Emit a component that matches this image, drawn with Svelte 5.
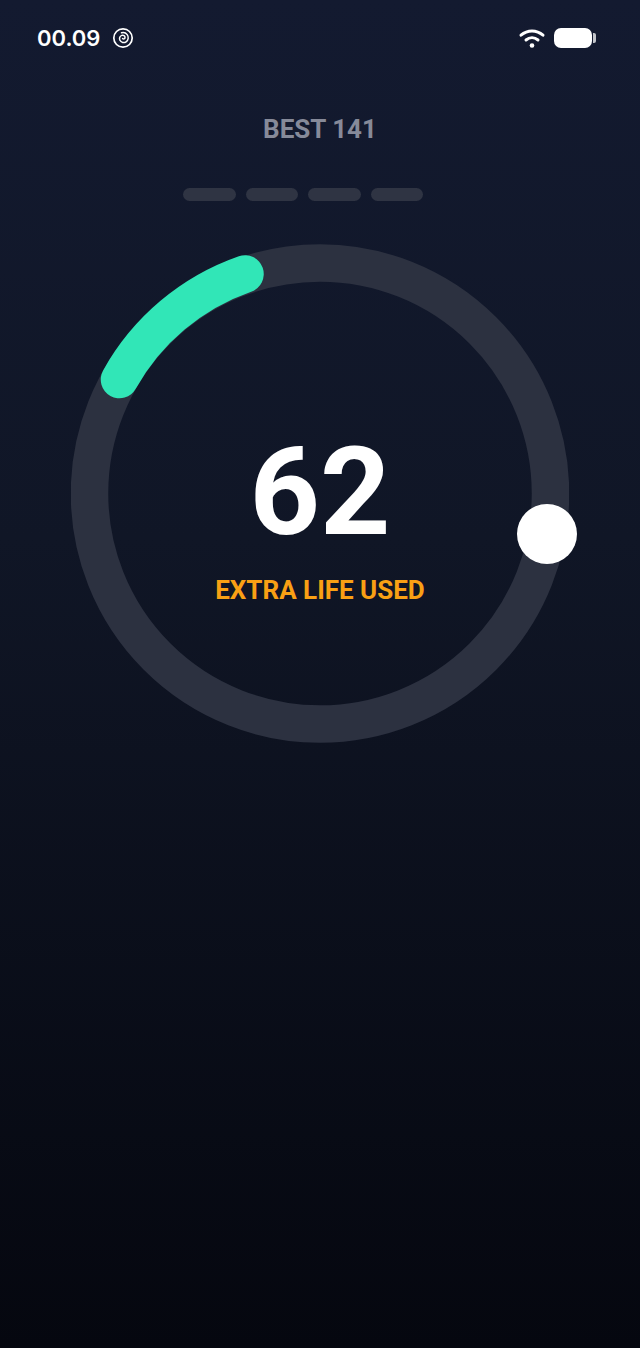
<script>
	let best = 141;
	let score = 62;
	let lives = [1, 2, 3, 4];
</script>

<div class="screen">
	<div class="status">
		<div class="left">
			<span class="time">00.09</span>
			<svg class="spiral" width="22" height="22" viewBox="0 0 22 22" fill="none" stroke="#fff">
				<circle cx="11" cy="11" r="9.200" stroke-width="1.700" />
				<path d="M10.600 11.500c.8.9 2.300.4 2.400-.9.1-1.600-1.600-2.700-3.200-2.200-2 .6-2.800 3-1.900 4.900 1.100 2.200 4.100 2.900 6.200 1.500 2.400-1.600 2.800-5 1.100-7.200-1.400-1.800-3.700-2.400-5.700-1.800" stroke-width="1.500" stroke-linecap="round" />
			</svg>
		</div>
		<div class="right">
			<svg width="28" height="22" viewBox="0 0 28 22" fill="none" stroke="#fff" stroke-width="3" stroke-linecap="round">
				<path d="M3 8.200C9.500 2.500 18.500 2.500 25 8.200" />
				<path d="M8 13c3.600-3 8.400-3 12 0" />
				<circle cx="14" cy="18.500" r="2.300" fill="#fff" stroke="none" />
			</svg>
			<div class="battery"></div>
			<div class="nub"></div>
		</div>
	</div>

	<div class="best">BEST {best}</div>

	<div class="lives">
		{#each lives as life (life)}
			<span class="pip"></span>
		{/each}
	</div>

	<div class="dial">
		<svg width="498" height="499" viewBox="0 0 498 499" fill="none">
			<circle cx="249" cy="249.500" r="230.500" stroke="#2c3140" stroke-width="37.500" />
			<path d="M48.500 135.500A230.500 230.500 0 0 1 174 30" stroke="#31e6b7" stroke-width="37.500" stroke-linecap="round" />
		</svg>
		<div class="center">
			<div class="score">{score}</div>
			<div class="label">EXTRA LIFE USED</div>
		</div>
		<div class="thumb"></div>
	</div>
</div>

<style>
	:global(body) {
		margin: 0;
		background: #05070f;
	}
	.screen {
		height: 1348px;
		box-sizing: border-box;
		padding-top: 24px;
		background: linear-gradient(180deg, #131a30 0%, #101626 40%, #05070f 100%);
		font-family: Roboto, "Liberation Sans", sans-serif;
		overflow: hidden;
	}
	.status {
		display: flex;
		justify-content: space-between;
		align-items: center;
		height: 28px;
		padding: 0 44px 0 37px;
		color: #fff;
	}
	.left,
	.right {
		display: flex;
		align-items: center;
	}
	.time {
		font-family: Inter, sans-serif;
		font-weight: 600;
		font-size: 22px;
		line-height: 28px;
	}
	.spiral {
		margin-left: 12px;
	}
	.battery {
		width: 38.500px;
		height: 20.500px;
		margin-left: 7.500px;
		border-radius: 7px;
		background: #fff;
	}
	.nub {
		width: 3px;
		height: 10px;
		margin-left: 1px;
		border-radius: 0 2px 2px 0;
		background: rgba(255, 255, 255, 0.75);
	}
	.best {
		margin-top: 61px;
		text-align: center;
		font-size: 26px;
		line-height: 32px;
		font-weight: 700;
		color: #868a99;
	}
	.lives {
		display: flex;
		justify-content: center;
		gap: 10px;
		margin-top: 43px;
		padding-right: 34px;
	}
	.pip {
		width: 52.500px;
		height: 13px;
		border-radius: 7px;
		background: #2f3443;
	}
	.dial {
		position: relative;
		width: 498px;
		height: 499px;
		margin: 43px auto 0;
	}
	.dial svg {
		display: block;
	}
	.center {
		position: absolute;
		inset: 0;
		display: flex;
		flex-direction: column;
		align-items: center;
		padding-top: 178px;
		box-sizing: border-box;
	}
	.score {
		font-size: 123px;
		line-height: 140px;
		font-weight: 700;
		color: #fff;
	}
	.label {
		margin-top: 12px;
		font-size: 26px;
		line-height: 32px;
		font-weight: 700;
		color: #f9a014;
	}
	.thumb {
		position: absolute;
		left: 446.300px;
		top: 259.500px;
		width: 60px;
		height: 60px;
		border-radius: 50%;
		background: #fff;
	}
</style>
